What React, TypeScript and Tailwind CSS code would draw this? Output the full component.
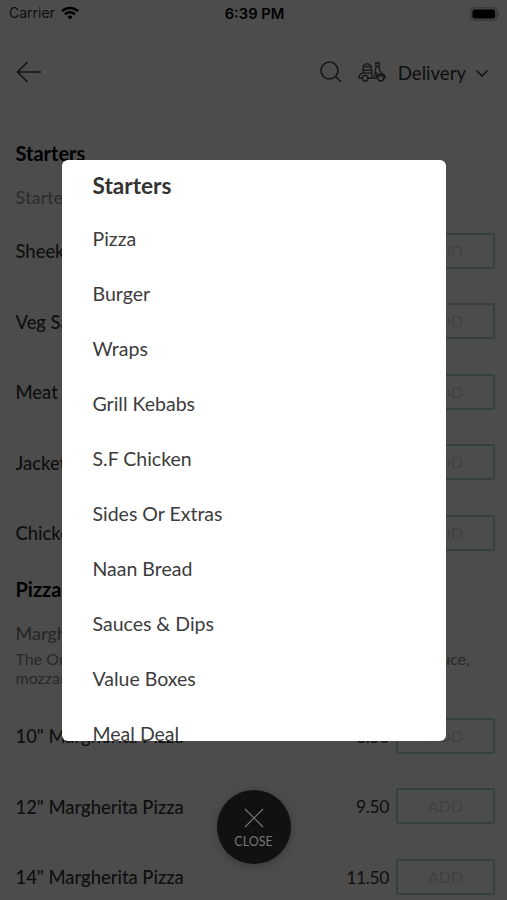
import { ReactNode } from 'react'

const STARTERS = [
  { name: 'Sheek Kebab', price: '3.50' },
  { name: 'Veg Samosa', price: '2.50' },
  { name: 'Meat Samosa', price: '2.50' },
  { name: 'Jacket Potato', price: '3.00' },
  { name: 'Chicken Wings', price: '3.50' },
]

const PIZZAS = [
  { name: '10" Margherita Pizza', price: '6.50' },
  { name: '12" Margherita Pizza', price: '9.50' },
  { name: '14" Margherita Pizza', price: '11.50' },
]

const CATEGORIES = [
  'Pizza',
  'Burger',
  'Wraps',
  'Grill Kebabs',
  'S.F Chicken',
  'Sides Or Extras',
  'Naan Bread',
  'Sauces & Dips',
  'Value Boxes',
  'Meal Deal',
]

function StatusBar() {
  return (
    <div className="grid h-7 grid-cols-3 items-center pl-[9px] pr-[7px] font-['Inter',sans-serif] text-black">
      <div className="flex items-center gap-[6px] pb-[2px]">
        <span className="text-[14px] leading-4 text-[#333]">Carrier</span>
        <svg width="18" height="14" viewBox="0 0 18 14" fill="none" stroke="currentColor" strokeWidth="2.5">
          <path d="M1 5.2a11.4 11.4 0 0 1 16 0" />
          <path d="M4 8.4a7.1 7.1 0 0 1 10 0" />
          <path d="M6.3 10.8a3.8 3.8 0 0 1 5.4 0L9 13.5z" fill="currentColor" stroke="none" />
        </svg>
      </div>
      <span className="text-center text-[14.7px] font-semibold whitespace-nowrap">6:39 PM</span>
      <svg className="-mt-[1px] justify-self-end" width="30" height="14" viewBox="0 0 30 14">
        <rect x=".8" y=".8" width="26" height="12.4" rx="3.5" fill="none" stroke="#b0b0b0" strokeWidth="1.2" />
        <rect x="2.4" y="2.4" width="22.8" height="9.2" rx="2" fill="currentColor" />
        <path d="M28.3 5.2c1.6.6 1.6 3 0 3.6z" fill="#999" />
      </svg>
    </div>
  )
}

function Header() {
  return (
    <header className="flex h-[90px] items-center pb-[2px] pl-4 pr-[18px] text-[#444]">
      <svg width="26" height="22" viewBox="0 0 26 22" fill="none" stroke="currentColor" strokeWidth="1.7">
        <path d="M11.5 1 1.5 11l10 10M1.5 11H25" />
      </svg>
      <svg className="ml-auto" width="22" height="22" viewBox="0 0 22 22" fill="none" stroke="currentColor" strokeWidth="1.6">
        <circle cx="9.5" cy="9.5" r="8.5" />
        <path d="m15.3 15.3 5.5 5.5" />
      </svg>
      <svg className="ml-[16px]" width="28" height="20" viewBox="0 0 28 20" fill="none" stroke="currentColor" strokeWidth="1.3" strokeLinejoin="round">
        <path d="M5 8.2V6.6C5 3.7 6.7 1.9 9.2 1.9s4.2 1.8 4.2 4.7v1.6zM6.1 4.6h6.2M5.5 8.2v2.9h8.2V8.2" />
        <path d="M5.3 10.6C2.6 11.6 1 13.4.9 16h3.4M10.1 16h8.6c.1-2-.5-3.8-2-5.2M17.1 1h4v3.6h-2.6M17.6 1l.6 3.7-1.6 6.5h3.4M21 4.6l.8 3.8 2.2 3.2c2 .7 3.1 2.2 3.2 4.4h-1.4M13.7 11.1v2.7h3.2" />
        <circle cx="7.2" cy="16.2" r="2.8" />
        <path d="M19.2 13.8c1.7-2.5 4.8-2.5 6.6-.5" />
        <circle cx="22.8" cy="16.2" r="2.8" />
      </svg>
      <span className="ml-[12px] pt-[1px] text-[18.6px] leading-6 text-[#333]">Delivery</span>
      <svg className="mt-[2px] ml-[9px]" width="14" height="9" viewBox="0 0 14 9" fill="none" stroke="currentColor" strokeWidth="1.6">
        <path d="m1.5 1.5 5.5 5.5 5.5-5.5" />
      </svg>
    </header>
  )
}

function MenuItem({ name, price }: { name: string; price: string }) {
  return (
    <li className="flex h-[70.5px] items-center">
      <span className="flex-1 pt-[3px]">{name}</span>
      <span className="pt-[2px] text-[17.5px] font-normal tracking-[-0.4px]">{price}</span>
      <span className="ml-[7px] flex h-9 w-[99px] items-center justify-center rounded-[2px] border-2 border-[#b4d8c8] text-[16px] font-normal text-[#d0dcd6]">
        ADD
      </span>
    </li>
  )
}

function Heading({ children }: { children: ReactNode }) {
  return <h2 className="text-[20px] leading-6 font-bold text-black">{children}</h2>
}

export default function App() {
  return (
    <div className="relative h-[900px] w-[507px] overflow-hidden bg-white font-['Lato',sans-serif]">
      <StatusBar />
      <Header />
      <main className="pt-[23px] pr-3 pl-[15.5px] text-[18.4px] font-medium text-[#333]">
        <Heading>Starters</Heading>
        <p className="mt-5 text-[18px] leading-6 text-[#999]">Starters</p>
        <ul className="mt-[6.5px]">
          {STARTERS.map((item) => (
            <MenuItem key={item.name} {...item} />
          ))}
        </ul>
        <div className="mt-[8.5px]">
          <Heading>Pizza</Heading>
        </div>
        <p className="mt-5 text-[18px] leading-6 text-[#888]">Margherita Pizza</p>
        <p className="mt-[4px] text-[16px] leading-[19px] font-normal whitespace-nowrap text-[#888]">
          <span className="flex w-[454px] justify-between">
            <span>The Original Margherita Topped</span>
            <span>With Tomato Sauce,</span>
          </span>
          mozzarella cheese
        </p>
        <ul className="mt-[14px]">
          {PIZZAS.map((item) => (
            <MenuItem key={item.name} {...item} />
          ))}
        </ul>
      </main>

      <div className="absolute inset-0 flex flex-col items-center bg-black/70 pt-40">
        <nav className="h-[581px] w-[384px] overflow-hidden rounded-[6px] bg-white pl-[31px] text-[19.5px] text-[#3c3c3c]">
          <div className="flex h-[51.5px] items-center text-[22.6px] font-bold text-[#333]">Starters</div>
          <ul>
            {CATEGORIES.map((category) => (
              <li key={category} className="flex h-[55px] items-center">
                {category}
              </li>
            ))}
          </ul>
        </nav>
        <button className="mt-[49px] flex h-[74px] w-[74px] flex-col items-center rounded-full bg-[#111] pt-[18px] text-[12.5px] leading-4 text-[#777] shadow-[0_2px_8px_rgba(0,0,0,0.25)]">
          <svg width="20" height="20" viewBox="0 0 20 20" stroke="currentColor" strokeWidth="1.2">
            <path d="m1 1 18 18M19 1 1 19" />
          </svg>
          <span className="mt-[6px]">CLOSE</span>
        </button>
      </div>
    </div>
  )
}
